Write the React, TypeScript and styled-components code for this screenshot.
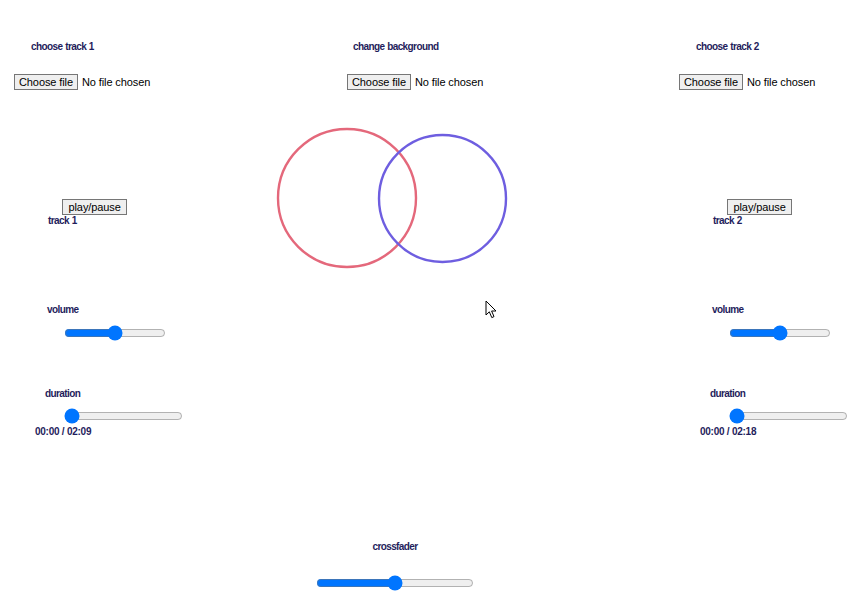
import React from "react";
import styled, { createGlobalStyle } from "styled-components";

const Global = createGlobalStyle`
  html, body { margin: 0; padding: 0; background: #ffffff; }
  body { font-family: "Liberation Sans", Arial, sans-serif; }
`;

const Page = styled.div`
  position: relative;
  width: 852px;
  height: 602px;
  overflow: hidden;
  background: #ffffff;
`;

const Header = styled.div`
  display: grid;
  grid-template-columns: 333px 332px 1fr;
  padding: 41px 0 0 14px;
`;

const Column = styled.div`
  display: flex;
  flex-direction: column;
  align-items: flex-start;
`;

const Label = styled.div<{ $indent?: number; $gap?: number }>`
  margin-left: ${(p) => p.$indent ?? 0}px;
  margin-top: ${(p) => p.$gap ?? 0}px;
  font-size: 10px;
  font-weight: 700;
  line-height: 11px;
  letter-spacing: -0.6px;
  word-spacing: 0.6px;
  color: #1f1d5c;
  white-space: nowrap;
`;

const TimeText = styled(Label)`
  letter-spacing: -0.25px;
  word-spacing: 0;
`;

const FileRow = styled.div`
  margin-top: 22px;
  display: flex;
  align-items: center;
  gap: 4px;
  height: 16px;
  font-size: 11px;
  letter-spacing: -0.1px;
  color: #000;
  white-space: nowrap;
`;

const NativeButton = styled.button<{ $indent?: number; $pad?: number }>`
  margin: 0 0 0 ${(p) => p.$indent ?? 0}px;
  height: 16px;
  padding: 0 ${(p) => p.$pad ?? 4}px;
  font-family: inherit;
  font-size: 11px;
  line-height: 14px;
  letter-spacing: -0.1px;
  color: #000;
  background: #efefef;
  border: 1px solid #767676;
  border-radius: 0;
  white-space: nowrap;
`;

const Main = styled.div`
  display: grid;
  grid-template-columns: 260px 405px 187px;
  align-items: start;
`;

const Panel = styled.div`
  display: flex;
  flex-direction: column;
  align-items: flex-start;
  padding-top: 109px;
`;

const Slider = styled.input<{ $indent?: number; $gap?: number; $width: number }>`
  margin: ${(p) => p.$gap ?? 0}px 0 0 ${(p) => p.$indent ?? 0}px;
  width: ${(p) => p.$width}px;
  height: 16px;
  padding: 0;
`;

const Visual = styled.svg`
  display: block;
  margin-top: 30px;
`;

const Footer = styled.div`
  display: flex;
  flex-direction: column;
  align-items: center;
  width: 158px;
  margin-left: 316px;
  padding-top: 104px;
`;

const Cursor = styled.svg`
  position: absolute;
  left: 485px;
  top: 300px;
`;

function FilePicker({ label, indent }: { label: string; indent: number }) {
  return (
    <Column>
      <Label $indent={indent}>{label}</Label>
      <FileRow>
        <NativeButton type="button">Choose file</NativeButton>
        <span>No file chosen</span>
      </FileRow>
    </Column>
  );
}

function TrackPanel({ name, time }: { name: string; time: string }) {
  return (
    <Panel>
      <NativeButton type="button" $indent={62} $pad={5.5}>
        play/pause
      </NativeButton>
      <Label $indent={48}>{name}</Label>
      <Label $indent={47} $gap={78}>
        volume
      </Label>
      <Slider type="range" min={0} max={100} defaultValue={50} $indent={64} $gap={10} $width={102} />
      <Label $indent={45} $gap={47}>
        duration
      </Label>
      <Slider type="range" min={0} max={100} defaultValue={0} $indent={64} $gap={9} $width={119} />
      <TimeText $indent={35} $gap={2}>
        {time}
      </TimeText>
    </Panel>
  );
}

export default function App() {
  return (
    <>
      <Global />
      <Page>
        <Header>
          <FilePicker label="choose track 1" indent={17} />
          <FilePicker label="change background" indent={6} />
          <FilePicker label="choose track 2" indent={17} />
        </Header>
        <Main>
          <TrackPanel name="track 1" time="00:00 / 02:09" />
          <Visual width={405} height={160} viewBox="0 0 405 160">
            <circle cx={87} cy={78} r={69} fill="none" stroke="#e4687b" strokeWidth={2.4} />
            <circle cx={182.5} cy={78.5} r={63.5} fill="none" stroke="#6e5ee0" strokeWidth={2.4} />
          </Visual>
          <TrackPanel name="track 2" time="00:00 / 02:18" />
        </Main>
        <Footer>
          <Label>crossfader</Label>
          <Slider type="range" min={0} max={100} defaultValue={50} $gap={23} $width={158} />
        </Footer>
        <Cursor width={13} height={19} viewBox="0 0 13 19">
          <path
            d="M1 1 L1 15 L4.3 11.8 L6.8 17.6 L9 16.6 L6.6 11 L11 11 Z"
            fill="#ffffff"
            stroke="#000000"
            strokeWidth={1}
            strokeLinejoin="round"
          />
        </Cursor>
      </Page>
    </>
  );
}
